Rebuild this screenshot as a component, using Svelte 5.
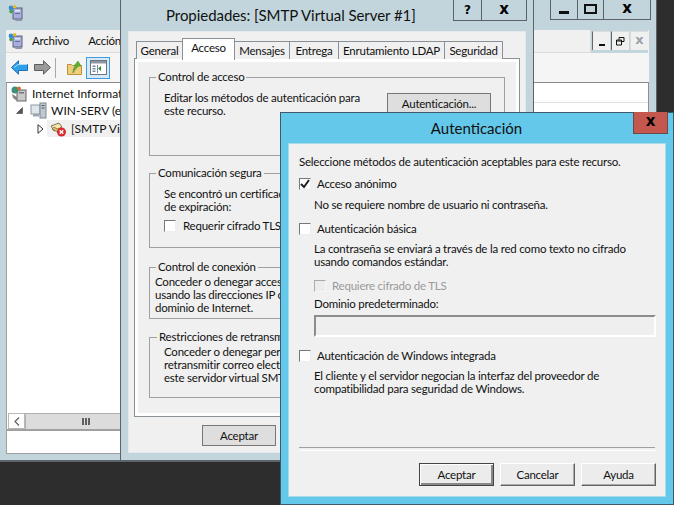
<script>
  const tabs = [
    { label: 'General', w: 47 },
    { label: 'Acceso', w: 53, active: true },
    { label: 'Mensajes', w: 55 },
    { label: 'Entrega', w: 49 },
    { label: 'Enrutamiento LDAP', w: 106 },
    { label: 'Seguridad', w: 58 }
  ];
</script>

{#snippet computer(w)}
  <svg width={w} height={w} viewBox="0 0 16 16" aria-hidden="true">
    <rect x="5" y="3" width="9" height="11" fill="#a9aee0" stroke="#5a6078"/>
    <rect x="7" y="5" width="5" height="1.5" fill="#e8ecf8"/>
    <rect x="7" y="8" width="5" height="1" fill="#666c94"/>
    <path d="M5 14l3 2h6v-2z" fill="#8f94a8"/>
    <circle cx="3" cy="3" r="2.4" fill="#2f8fd8"/>
    <circle cx="6.5" cy="1.8" r="1.8" fill="#e8b820"/>
    <circle cx="3" cy="6.6" r="1.8" fill="#3fa648"/>
  </svg>
{/snippet}

<div class="desktop">
  <section class="win iis">
    <div class="iis-title">
      {@render computer(16)}
      <div class="caption-btns">
        <span class="cap w28"><i class="min-bar"></i></span>
        <span class="cap w26"><i class="max-box"></i></span>
        <span class="cap w47"><b>x</b></span>
      </div>
    </div>
    <div class="iis-frame">
      <div class="menubar">
        <div class="menu-left">
          {@render computer(16)}
          <span class="m1">Archivo</span>
          <span>Acción</span>
        </div>
        <div class="mdi-btns">
          <span class="mdi"><i class="mdi-min"></i></span>
          <span class="mdi">
            <svg width="9" height="9" viewBox="0 0 9 9" aria-hidden="true"><path d="M3 2.5V.5h5v4H6M.5 3h5v5h-5zM.5 4h5" fill="none" stroke="#111"/></svg>
          </span>
          <span class="mdi off"><b>x</b></span>
        </div>
      </div>
      <div class="toolbar">
        <svg class="tool-arrow" width="17" height="15" viewBox="0 0 17 15" aria-hidden="true"><path d="M.5 7.5L7.5.8v3.7h9v6h-9v3.7z" fill="#2f9fe8" stroke="#1f6fb8"/><path d="M3 7.5L7 4.5h9" fill="none" stroke="#a5dcfa"/></svg>
        <svg class="tool-arrow fwd" width="17" height="15" viewBox="0 0 17 15" aria-hidden="true"><path d="M16.5 7.5L9.5.8v3.7h-9v6h9v3.7z" fill="#9a9a9a" stroke="#5e5e5e"/></svg>
        <i class="tool-sep"></i>
        <svg class="tool-folder" width="15" height="15" viewBox="0 0 15 15" aria-hidden="true"><path d="M.5 4.5h4l1 1h9v9H.5z" fill="#f0cd78" stroke="#b8933c"/><path d="M6 13c0-4 1-6 3-7H7l4-5 3 5h-2c-2 1-4 3-6 7z" fill="#58b030" stroke="#3a8a20" stroke-width=".5"/></svg>
        <span class="tool-on">
          <svg width="17" height="15" viewBox="0 0 17 15" aria-hidden="true"><rect x=".5" y=".5" width="16" height="14" fill="#fff" stroke="#6c7480"/><rect x="1" y="1" width="15" height="2.5" fill="#8d97a4"/><rect x="2.5" y="5.5" width="3" height="1.5" fill="#7a8ca0"/><rect x="2.5" y="8" width="3" height="1.5" fill="#7a8ca0"/><rect x="2.5" y="10.5" width="3" height="1.5" fill="#7a8ca0"/><path d="M11 6l-3 2.5 3 2.5z" fill="#2e8a3a"/><rect x="7" y="5" width="1" height="8" fill="#7a8ca0"/></svg>
        </span>
        <i class="tool-next"></i>
      </div>
      <div class="tree-wrap">
        <ul class="tree">
          <li class="lvl0">
            <svg width="16" height="16" viewBox="0 0 16 16" aria-hidden="true"><rect x="6" y="4" width="9" height="11" fill="#c9c9c9" stroke="#666"/><circle cx="4" cy="4" r="3.5" fill="#3f8f7f"/><circle cx="8" cy="2.5" r="2" fill="#d07030"/><rect x="8" y="6" width="5" height="1.5" fill="#777"/><path d="M1 8l5 3v4l-4-3z" fill="#888"/></svg>
            <span>Internet Information</span>
          </li>
          <li class="lvl1">
            <svg class="open" width="7" height="7" viewBox="0 0 7 7" aria-hidden="true"><path d="M6.5.5v6h-6z" fill="#555" stroke="#444" stroke-width=".6"/></svg>
            <svg width="17" height="17" viewBox="0 0 17 17" aria-hidden="true"><rect x="1" y="3" width="9" height="9" fill="#dfe6ec" stroke="#8b98a4"/><rect x="10" y="1" width="6" height="15" fill="#c0c8d0" stroke="#7d8894"/><rect x="11.5" y="3" width="3" height="1" fill="#556"/><rect x="11.5" y="5.5" width="3" height="1" fill="#556"/><rect x="3" y="12" width="6" height="2.5" fill="#9aa5b0"/></svg>
            <span>WIN-SERV (equipo)</span>
          </li>
          <li class="lvl2">
            <svg class="closed" width="7" height="10" viewBox="0 0 7 10" aria-hidden="true"><path d="M1 .7L6 5 1 9.3z" fill="#fff" stroke="#333"/></svg>
            <span class="smtp-row">
              <svg width="16" height="16" viewBox="0 0 16 16" aria-hidden="true"><path d="M1 5l8-3 3 4-8 4z" fill="#f5e9a8" stroke="#5c5436" stroke-width=".8"/><path d="M2 8l7 4 2-2-7-4z" fill="#d8c05a" stroke="#555" stroke-width=".6"/><circle cx="11.5" cy="11" r="4.5" fill="#d92a30"/><path d="M9.7 9.2l3.6 3.6m0-3.6l-3.6 3.6" stroke="#fff" stroke-width="1.4"/></svg>
              <span>[SMTP Virtual</span>
            </span>
          </li>
        </ul>
        <div class="hscroll">
          <span class="arrow-btn">
            <svg width="6" height="9" viewBox="0 0 6 9" aria-hidden="true"><path d="M5 .5L1 4.5l4 4" fill="none" stroke="#606060" stroke-width="1.2"/></svg>
          </span>
          <span class="thumb"><i></i><i></i><i></i></span>
        </div>
        <div class="status"></div>
      </div>
    </div>
  </section>

  <section class="win props">
    <header class="props-title">
      <h1>Propiedades: [SMTP Virtual Server #1]</h1>
      <div class="caption-btns">
        <span class="cap w29"><b class="q">?</b></span>
        <span class="cap w45"><b>x</b></span>
      </div>
    </header>
    <div class="props-panel">
      <div class="tabs">
        {#each tabs as t}
          <span class="tab" class:active={t.active} style="width: {t.w}px">{t.label}</span>
        {/each}
      </div>
      <div class="tabpage">
        <fieldset class="g1">
          <legend>Control de acceso</legend>
          <div class="g1-row">
            <p>Editar los métodos de autenticación para<br/>este recurso.</p>
            <span class="btn flat auth-btn">Autenticación...</span>
          </div>
        </fieldset>
        <fieldset class="g2">
          <legend>Comunicación segura</legend>
          <p>Se encontró un certificado<br/>de expiración:</p>
          <label class="chk"><i class="box"></i>Requerir cifrado TLS</label>
        </fieldset>
        <fieldset class="g3">
          <legend>Control de conexión</legend>
          <p>Conceder o denegar acceso<br/>usando las direcciones IP o<br/>dominio de Internet.</p>
        </fieldset>
        <fieldset class="g4">
          <legend>Restricciones de retransmisión</legend>
          <p>Conceder o denegar permisos<br/>retransmitir correo electrónico<br/>este servidor virtual SMTP</p>
        </fieldset>
      </div>
      <div class="props-foot"><span class="btn flat ok">Aceptar</span></div>
    </div>
  </section>

  <section class="win auth">
    <header class="auth-title">
      <h2>Autenticación</h2>
      <span class="close"><b>x</b></span>
    </header>
    <div class="auth-panel">
      <p class="intro">Seleccione métodos de autenticación aceptables para este recurso.</p>

      <label class="chk opt first">
        <i class="box">
          <svg width="10" height="10" viewBox="0 0 10 10" aria-hidden="true"><path d="M1 5l3 3 5-7" fill="none" stroke="#222" stroke-width="2"/></svg>
        </i>
        Acceso anónimo
      </label>
      <p class="desc d1">No se requiere nombre de usuario ni contraseña.</p>

      <label class="chk opt second"><i class="box"></i>Autenticación básica</label>
      <p class="desc d2">La contraseña se enviará a través de la red como texto no cifrado<br/>usando comandos estándar.</p>

      <label class="chk sub"><i class="box dis"></i>Requiere cifrado de TLS</label>
      <p class="desc d3">Dominio predeterminado:</p>
      <div class="input"></div>

      <label class="chk opt third"><i class="box"></i>Autenticación de Windows integrada</label>
      <p class="desc d4">El cliente y el servidor negocian la interfaz del proveedor de<br/>compatibilidad para seguridad de Windows.</p>

      <div class="spacer"></div>
      <hr/>
      <div class="btn-row">
        <span class="btn def">Aceptar</span>
        <span class="btn">Cancelar</span>
        <span class="btn">Ayuda</span>
      </div>
    </div>
  </section>
</div>

<style>
  :global(body) {
    margin: 0;
    background: #2d2d2d;
  }

  .desktop {
    position: relative;
    width: 674px;
    height: 505px;
    overflow: hidden;
    background: #2d2d2d;
    font-family: Lato, "Noto Sans", sans-serif;
    font-size: 11.5px;
    letter-spacing: -0.22px;
    line-height: 13px;
    color: #111;
  }

  h1, h2, p { margin: 0; font-weight: 400; }

  .win {
    position: absolute;
    box-sizing: border-box;
    display: flex;
    flex-direction: column;
  }

  /* back window */
  .iis {
    left: 0;
    top: 0;
    width: 657px;
    height: 462px;
    background: #c2d5dc;
    border-right: 1px solid #5b6368;
    border-bottom: 2px solid #5b6368;
    padding: 0 7px 6px 6px;
  }
  .iis-title {
    height: 30px;
    flex: none;
    position: relative;
    padding: 5px 0 0 2px;
    box-sizing: border-box;
  }
  .iis-title .caption-btns { position: absolute; top: 0; left: 544px; }

  .caption-btns { display: flex; }
  .cap {
    height: 20px;
    box-sizing: border-box;
    display: flex;
    align-items: center;
    justify-content: center;
    border: 1px solid #5b6368;
    border-top: none;
    border-left-width: 0;
    background: #c2d5dc;
  }
  .cap:first-child { border-left-width: 1px; }
  .cap b, .mdi b, .close b {
    font-family: "DejaVu Sans", sans-serif;
    font-weight: 700;
    font-size: 15px;
    line-height: 14px;
    letter-spacing: 0;
    color: #000;
    margin-top: -3px;
  }
  .cap .q { font-size: 12px; margin-top: 0; }
  .w28 { width: 28px; }
  .w26 { width: 26px; }
  .w47 { width: 47px; }
  .w29 { width: 29px; }
  .w45 { width: 45px; }
  .min-bar { width: 10px; height: 3px; background: #111; margin-top: 6px; }
  .max-box { width: 9px; height: 6px; border: 2px solid #111; margin-top: -1px; }

  .iis-frame {
    flex: 1;
    display: flex;
    flex-direction: column;
    min-height: 0;
  }
  .menubar {
    height: 23px;
    flex: none;
    display: flex;
    background: #f0f0f0;
  }
  .menu-left {
    width: 585px;
    display: flex;
    align-items: center;
    gap: 11px;
    padding: 0 0 1px 2px;
    border-bottom: 1px solid #dcdcdc;
    border-right: 1px solid #dcdcdc;
    box-sizing: border-box;
    background: #f0f0f0;
  }
  .m1 { margin-left: -3px; margin-right: 8px; }
  .mdi-btns { display: flex; gap: 1px; padding: 1px 0 0 1px; background: #c2d5dc; }
  .mdi {
    width: 18px;
    height: 19px;
    box-sizing: border-box;
    display: flex;
    align-items: center;
    justify-content: center;
    background: #f0f0f0;
    border-left: 1px solid #666;
    border-top: 1px solid #ddd;
  }
  .mdi.off { border-left-color: #dcdcdc; }
  .mdi.off b { color: #9aa2ac; font-size: 13px; }
  .mdi-min { width: 6px; height: 2px; background: #111; margin-top: 7px; }

  .toolbar {
    height: 29px;
    flex: none;
    display: flex;
    align-items: center;
    padding-left: 5px;
    background: #f5f5f5;
  }
  .tool-arrow.fwd { margin-left: 6px; }
  .tool-sep { width: 1px; height: 20px; background: #a8a8a8; margin: 0 11px 0 4px; }
  .tool-on {
    width: 24px;
    height: 22px;
    box-sizing: border-box;
    margin-left: 4px;
    display: flex;
    align-items: center;
    justify-content: center;
    background: #d5e9f8;
    border: 1px solid #3f9ade;
  }
  .tool-next { width: 4px; height: 14px; margin-left: 10px; background: #777; }

  .tree-wrap {
    flex: 1;
    min-height: 0;
    display: flex;
    flex-direction: column;
    border: 1px solid #a0a0a0;
    border-top-color: #888;
    border-right-color: #8f8f8f;
    background: #fff;
    box-sizing: border-box;
  }
  .tree {
    list-style: none;
    margin: 0;
    padding: 2px 0 0 4px;
    flex: 1;
    font-size: 12px;
    letter-spacing: 0;
    white-space: nowrap;
    background: linear-gradient(#fff 19px, #e2e2e2 19px, #e2e2e2 20px, #fff 20px) no-repeat right top / 130px 100%;
    min-height: 0;
  }
  .tree li {
    display: flex;
    align-items: center;
    height: 17px;
  }
  .lvl0 { gap: 5px; }
  .lvl1 { padding-left: 5px; gap: 7px; }
  .lvl1 svg + svg { margin-right: -3px; }
  .lvl2 { padding-left: 26px; gap: 3px; margin-top: 1px; }
  .smtp-row {
    display: flex;
    align-items: center;
    gap: 5px;
    height: 17px;
    padding: 0 2px 0 3px;
    background: #f0f0f0;
  }
  .hscroll {
    height: 18px;
    flex: none;
    display: flex;
    align-items: stretch;
    padding-left: 1px;
    background: #fff;
    box-sizing: border-box;
    border-bottom: 2px solid #a0a0a0;
  }
  .arrow-btn {
    width: 17px;
    display: flex;
    align-items: center;
    justify-content: center;
    border: 1px solid #b8b8b8;
    box-sizing: border-box;
  }
  .thumb {
    flex: 1;
    display: flex;
    gap: 1px;
    padding-left: 56px;
    align-items: center;
    background: #dcdcdc;
    border: 1px solid #b0b0b0;
    border-bottom: none;
  }
  .thumb i { width: 2px; height: 7px; background: #606060; }
  .status { height: 22px; flex: none; background: #fff; }

  /* properties dialog */
  .props {
    left: 120px;
    top: 0;
    width: 414px;
    height: 462px;
    background: #c2d5dc;
    border: 1px solid #5b6368;
    border-top: none;
    border-bottom-width: 2px;
    padding: 0 7px 7px 7px;
  }
  .props-title {
    height: 31px;
    flex: none;
    position: relative;
  }
  .props-title h1 {
    font-size: 15px;
    line-height: 30px;
    letter-spacing: -0.05px;
    padding-left: 38px;
    white-space: nowrap;
  }
  .props-title .caption-btns { position: absolute; left: 325px; top: 0; }
  .props-title .cap { height: 21px; }

  .props-panel {
    flex: 1;
    background: #f0f0f0;
    border: 1px solid #e3eaed;
    display: flex;
    flex-direction: column;
    min-height: 0;
    padding: 7px 5px 0 5px;
  }
  .tabs {
    display: flex;
    height: 20px;
    padding-left: 2px;
    align-items: flex-end;
    position: relative;
    z-index: 1;
    margin-bottom: -1px;
  }
  .tab {
    box-sizing: border-box;
    height: 18px;
    display: flex;
    align-items: center;
    justify-content: center;
    background: #f0f0f0;
    border: 1px solid #8a9196;
    border-bottom: none;
    border-left-width: 0;
    white-space: nowrap;
  }
  .tab:first-child { border-left-width: 1px; }
  .tab.active {
    height: 22px;
    background: #fff;
    border-left-width: 1px;
    padding-bottom: 5px;
    margin-bottom: -1px;
    margin-left: -1px;
  }
  .tabpage {
    box-sizing: border-box;
    height: 359px;
    border: 1px solid #8a9196;
    background: #f0f0f0;
    box-shadow: inset 0 0 0 3px #fff;
    padding: 12px 14px 0 14px;
    display: flex;
    flex-direction: column;
    white-space: nowrap;
  }
  fieldset {
    margin: 0;
    box-sizing: border-box;
    border: 1px solid #a0a0a0;
    padding: 0 0 0 14px;
    min-width: 0;
  }
  legend {
    padding: 0 2px 1px;
    margin-left: -8px;
    line-height: 12px;
  }
  .g1 { height: 85px; }
  .g1 p { padding-top: 7px; }
  .g1-row { display: grid; grid-template-columns: 223px 104px; }
  .btn.auth-btn { width: 104px; height: 21px; margin-top: 9px; }
  .g2 { height: 81px; margin-top: 11px; }
  .g2 p { padding-top: 7px; }
  .g2 .chk { margin-top: 6px; }
  .g2 .box { margin-right: 7px; }
  .g3 { height: 58px; margin-top: 13px; padding-left: 5px; }
  .g3 legend { margin-left: 1px; }
  .g3 p { padding-top: 1px; }
  .g4 { height: 67px; margin-top: 12px; }
  .g4 legend { margin-left: -7px; }
  .g4 p { padding-top: 1px; }

  .props-foot { flex: 1; padding: 8px 0 0 68px; }
  .btn.ok { width: 74px; height: 21px; }

  .btn {
    box-sizing: border-box;
    display: flex;
    align-items: center;
    justify-content: center;
    width: 75px;
    height: 23px;
    background: #ececec;
    border: 1px solid;
    border-color: #fff #646464 #646464 #fff;
    box-shadow: inset -1px -1px 0 #a8a8a8;
    white-space: nowrap;
  }
  .btn.flat {
    background: #dedede;
    border: 1px solid #777;
    box-shadow: none;
  }
  .btn.def { border: 1px solid #444; box-shadow: inset 1px 1px 0 #fff, inset -2px -2px 0 #888; }

  .chk {
    display: flex;
    align-items: center;
  }
  .box {
    box-sizing: border-box;
    width: 12px;
    height: 12px;
    flex: none;
    margin-right: 6px;
    display: flex;
    align-items: center;
    justify-content: center;
    background: #fff;
    border: 1px solid;
    border-color: #777 #eee #eee #777;
  }
  .box.dis { background: #ececec; border-color: #aaa #f8f8f8 #f8f8f8 #aaa; }

  /* front dialog */
  .auth {
    left: 280px;
    top: 112px;
    width: 394px;
    height: 393px;
    background: #63c8ea;
    border: 1px solid #3d5a68;
    padding: 0 7px 7px 7px;
  }
  .auth-title {
    height: 30px;
    flex: none;
    position: relative;
  }
  .auth-title h2 {
    font-size: 15px;
    line-height: 30px;
    letter-spacing: 0;
    text-align: center;
    padding-right: 1px;
  }
  .close {
    position: absolute;
    right: -2px;
    top: -1px;
    width: 35px;
    height: 22px;
    box-sizing: border-box;
    display: flex;
    align-items: center;
    justify-content: center;
    background: #c4574e;
    border: 1px solid #6a4a48;
    border-top: none;
  }
  .auth-panel {
    flex: 1;
    box-sizing: border-box;
    background: #f0f0f0;
    border: 1px solid #a8dcec;
    padding: 11px 9px 10px 10px;
    display: flex;
    flex-direction: column;
    white-space: nowrap;
    min-height: 0;
  }
  .first { margin-top: 9px; }
  .second { margin-top: 11px; }
  .third { margin-top: 12px; }
  .sub { margin: 11px 0 0 15px; color: #9a9a9a; }
  .desc { margin-left: 15px; }
  .d1 { margin-top: 8px; }
  .d2 { margin-top: 7px; }
  .d3 { margin-top: 5px; }
  .d4 { margin-top: 7px; }
  .input {
    box-sizing: border-box;
    height: 22px;
    margin: 5px 0 0 15px;
    width: 342px;
    background: #efefef;
    border: 2px solid;
    border-color: #8c8c8c #fff #fff #8c8c8c;
  }
  .spacer { flex: 1; }
  hr {
    width: 356px;
    margin: 0;
    height: 2px;
    border: none;
    border-top: 1px solid #a0a0a0;
    border-bottom: 1px solid #fff;
  }
  .btn-row {
    display: flex;
    gap: 6px;
    margin: 12px 0 0 120px;
  }
</style>
